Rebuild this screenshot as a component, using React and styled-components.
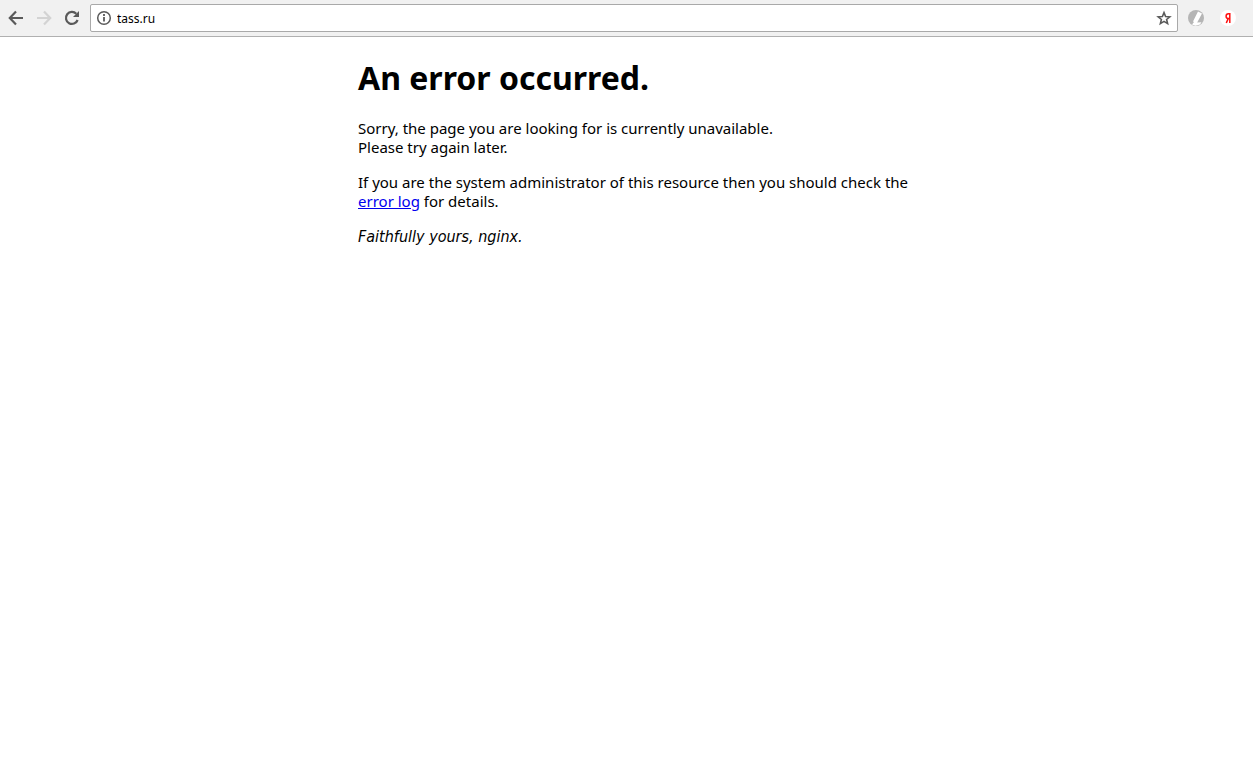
import React from 'react';
import styled, { createGlobalStyle } from 'styled-components';

const GlobalStyle = createGlobalStyle`
  *, *::before, *::after { box-sizing: border-box; }
  body {
    margin: 0;
    background: #fff;
    color: #000;
    font: 15px/19px Tahoma, "Noto Sans", sans-serif;
  }
`;

const Toolbar = styled.header`
  display: flex;
  align-items: center;
  padding: 4px 17px 4px 6px;
  background: #f1f1f1;
  border-bottom: 1px solid #b0b0b0;
`;

const NavGroup = styled.nav`
  display: flex;
  gap: 8px;
  margin-right: 8px;
`;

const IconButton = styled.button`
  display: grid;
  place-items: center;
  flex: none;
  width: ${(p) => p.$size || 20}px;
  height: ${(p) => p.$size || 20}px;
  padding: 0;
  border: 0;
  background: none;
  color: #5a5a5a;

  &:disabled { color: #d3d3d3; }
`;

const AddressBar = styled.form`
  display: flex;
  flex: 1;
  align-items: center;
  gap: 5px;
  height: 28px;
  padding: 0 5px;
  background: #fff;
  border: 1px solid #a9a9a9;
  border-radius: 2px;
`;

const AddressInput = styled.input`
  flex: 1;
  min-width: 0;
  padding: 2px 0 0;
  border: 0;
  outline: 0;
  background: none;
  color: #000;
  font: 12px/16px Tahoma, "Noto Sans", sans-serif;
`;

const Extensions = styled.div`
  display: flex;
  gap: 16px;
  margin-left: 10px;
`;

const Page = styled.main`
  padding: 21px 0 0 23px;
`;

const Message = styled.article`
  max-width: 560px;
  margin: 0 auto;
`;

const Title = styled.h1`
  margin: 0 0 22px;
  font-size: 32px;
  line-height: 39px;
`;

const Paragraph = styled.p`
  margin: 0 0 16px;
`;

const ErrorLink = styled.a`
  color: #0000ee;
  text-decoration: underline;
`;

const Signature = styled.em`
  font-family: Tahoma, "DejaVu Sans Condensed", sans-serif;
  font-size: 16px;
`;

const Svg = ({ size = 16, children }) => (
  <svg width={size} height={size} viewBox={`0 0 ${size} ${size}`} fill="none" stroke="currentColor" strokeWidth="2" aria-hidden="true">
    {children}
  </svg>
);

export default function App() {
  return (
    <>
      <GlobalStyle />
      <Toolbar>
        <NavGroup aria-label="Browser navigation">
          <IconButton type="button" aria-label="Back">
            <Svg><path d="M15 8H2.5M8 1.5 1.8 8 8 14.5" strokeWidth="2.2" /></Svg>
          </IconButton>
          <IconButton type="button" aria-label="Forward" disabled>
            <Svg><path d="M1 8h12.5M8 1.5 14.2 8 8 14.5" strokeWidth="2.2" /></Svg>
          </IconButton>
          <IconButton type="button" aria-label="Reload">
            <Svg>
              <path d="M13.6 10A6 6 0 1 1 12.3 3.8" strokeWidth="2.2" />
              <path d="M15 1v6H9z" fill="currentColor" stroke="none" />
            </Svg>
          </IconButton>
        </NavGroup>
        <AddressBar onSubmit={(e) => e.preventDefault()}>
          <IconButton type="button" $size={16} aria-label="Site information">
            <Svg>
              <circle cx="8" cy="8" r="6.3" strokeWidth="1.5" />
              <path d="M8 7v4.500M8 4v2" strokeWidth="1.8" />
            </Svg>
          </IconButton>
          <AddressInput aria-label="Address" defaultValue="tass.ru" spellCheck={false} />
          <IconButton type="button" $size={16} aria-label="Bookmark this page">
            <Svg>
              <path d="m8 2.600 1.600 3.900 4.200.3-3.200 2.700 1 4.100L8 11.400l-3.600 2.200 1-4.100-3.200-2.700 4.200-.3z" strokeWidth="1.6" />
            </Svg>
          </IconButton>
        </AddressBar>
        <Extensions>
          <IconButton type="button" $size={16} aria-label="Extension">
            <Svg>
              <circle cx="8" cy="8" r="8" fill="#b5b5b5" stroke="none" />
              <path d="M10 1.500 5 11.500l1 .6-2 2.400 3.500 1.300 4.500-1.200 1.500-2.300-4.300.3L14 3.500z" fill="#fff" stroke="none" />
            </Svg>
          </IconButton>
          <IconButton type="button" $size={16} aria-label="Yandex">
            <Svg>
              <circle cx="8" cy="8" r="8" fill="#fff" stroke="none" />
              <path d="M9.800 3v10M9.800 3.800H8.500a2.300 2.300 0 0 0 0 4.800H9.800M8.200 8.600 6.300 13" stroke="#f11" strokeWidth="1.5" />
            </Svg>
          </IconButton>
        </Extensions>
      </Toolbar>
      <Page>
        <Message>
          <Title>An error occurred.</Title>
          <Paragraph>
            Sorry, the page you are looking for is currently unavailable.
            <br />
            Please try again later.
          </Paragraph>
          <Paragraph>
            If you are the system administrator of this resource then you should check the{' '}
            <ErrorLink href="#error-log">error log</ErrorLink> for details.
          </Paragraph>
          <Paragraph>
            <Signature>Faithfully yours, nginx.</Signature>
          </Paragraph>
        </Message>
      </Page>
    </>
  );
}
